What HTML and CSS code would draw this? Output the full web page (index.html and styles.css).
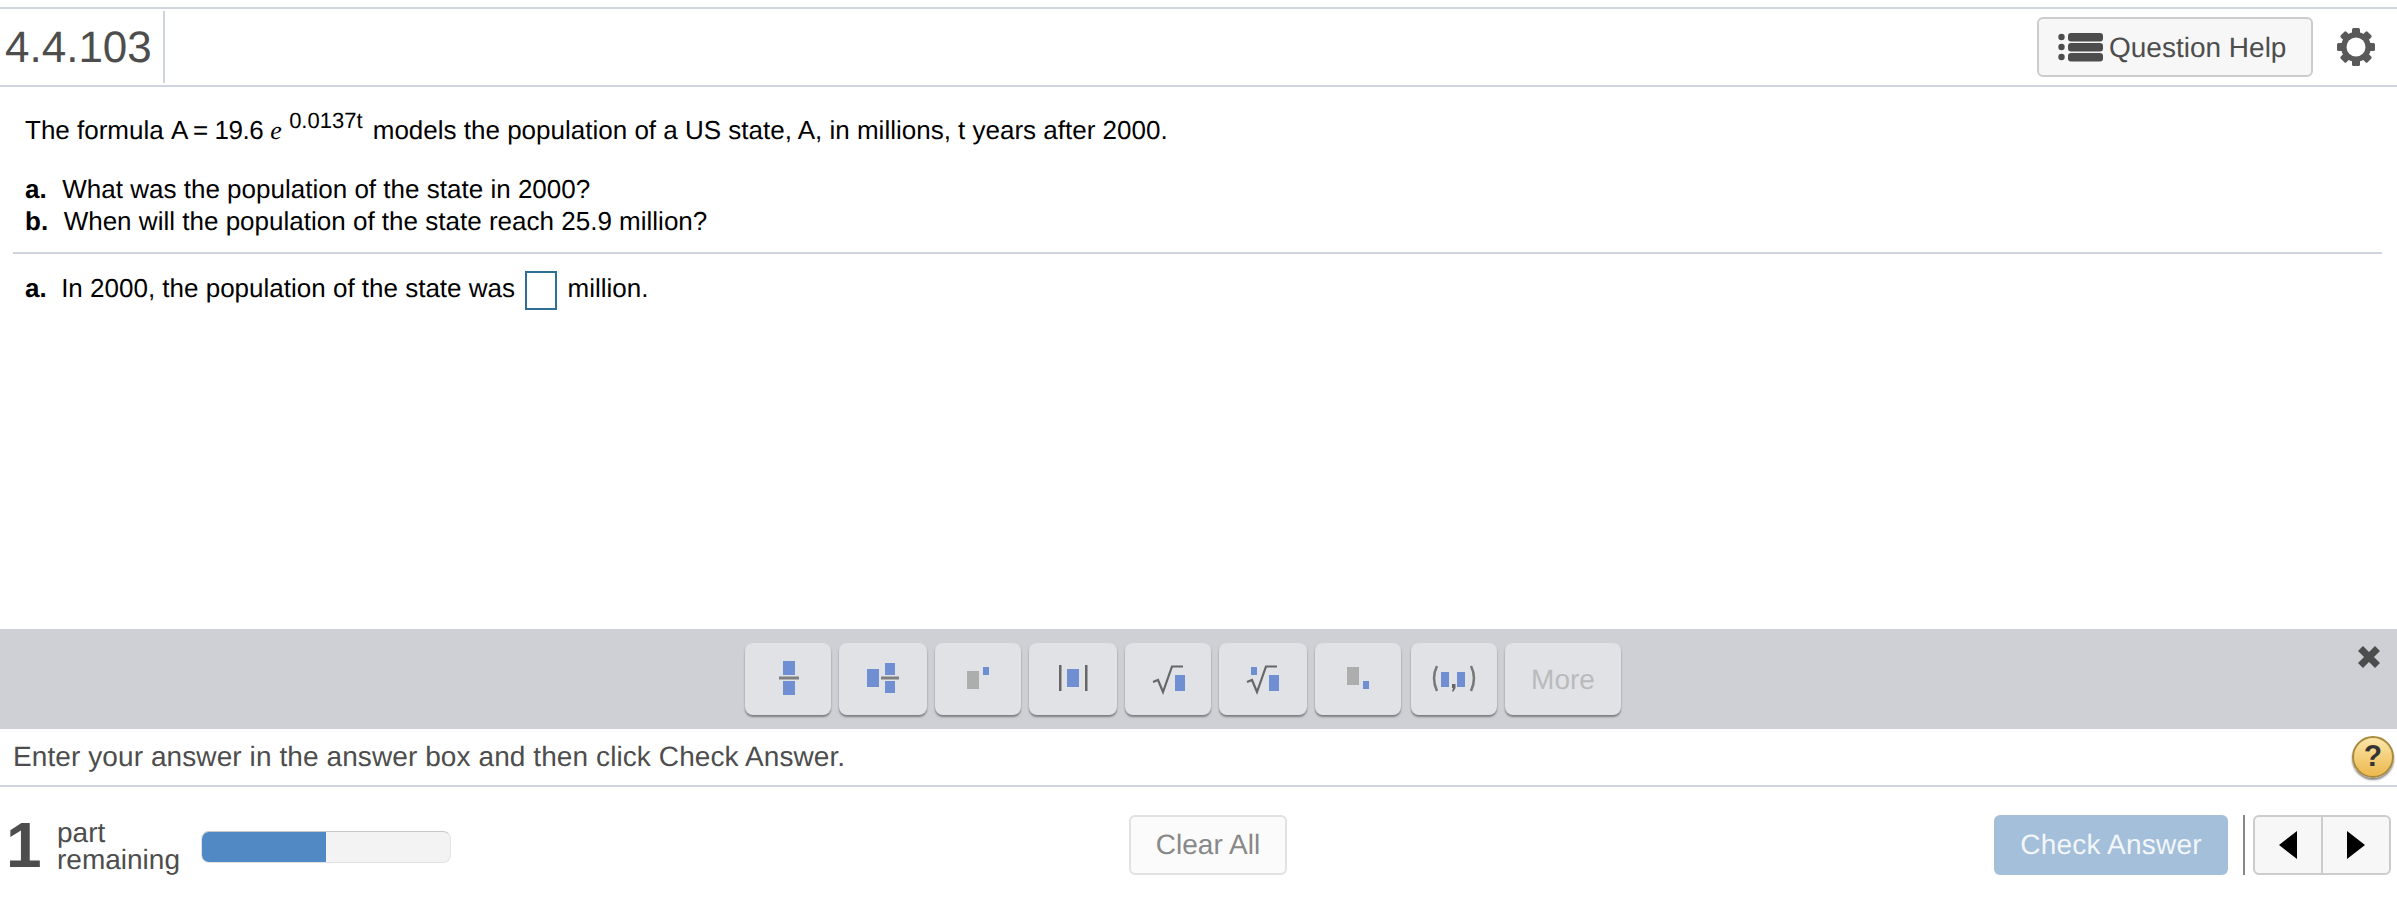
FILE: index.html
```html
<!DOCTYPE html>
<html lang="en">
<head>
    <meta charset="UTF-8">
    <title>4.4.103</title>
    <link rel="stylesheet" href="styles.css">
</head>
<body>
    <!-- Header -->
    <div class="header">
        <div class="title">4.4.103</div>
        <button class="help-btn">
            <svg class="help-icon" width="46" height="30" viewBox="0 0 46 30">
                <circle cx="4.5" cy="5" r="3.2"/><circle cx="4.5" cy="15" r="3.2"/><circle cx="4.5" cy="25" r="3.2"/>
                <rect x="11" y="1" width="35" height="8.5" rx="3"/><rect x="11" y="11" width="35" height="8.5" rx="3"/><rect x="11" y="21" width="35" height="8.5" rx="3"/>
            </svg>
            <span class="help-label">Question Help</span>
        </button>
        <svg class="gear" width="40" height="40" viewBox="0 0 40 40">
            <g fill="#595959">
                <rect x="16" y="1" width="8" height="38" rx="1.5"/>
                <rect x="16" y="1" width="8" height="38" rx="1.5" transform="rotate(45 20 20)"/>
                <rect x="16" y="1" width="8" height="38" rx="1.5" transform="rotate(90 20 20)"/>
                <rect x="16" y="1" width="8" height="38" rx="1.5" transform="rotate(135 20 20)"/>
                <circle cx="20" cy="20" r="15"/>
            </g>
            <circle cx="20" cy="20" r="9.5" fill="#fff"/>
        </svg>
    </div>

    <!-- Question -->
    <div class="main">
        <p class="formula">The formula <span class="tight">A = 19.6</span> <i class="e">e</i> <span class="exp">0.0137t</span> models the population of a US state, A, in millions, t years after 2000.</p>
        <div class="parts">
            <div><b>a.</b>&nbsp; What was the population of the state in 2000?</div>
            <div><b>b.</b>&nbsp; When will the population of the state reach 25.9 million?</div>
        </div>
        <div class="answer-row">
            <b>a.</b>&nbsp; In 2000, the population of the state was <span class="answer-box"></span> million.
        </div>
    </div>

    <!-- Math palette -->
    <div class="palette">
        <div class="tools">
            <div class="tool t86"><svg width="86" height="72"><rect class="bl" x="38" y="18" width="12" height="14"/><rect class="ln" x="34" y="33.5" width="20" height="3"/><rect class="bl" x="38" y="38" width="12" height="14"/></svg></div>
            <div class="tool t88"><svg width="88" height="72"><rect class="bl" x="28" y="26" width="12" height="18"/><rect class="bl" x="46" y="20" width="10" height="12"/><rect class="ln" x="42" y="33.5" width="18" height="3"/><rect class="bl" x="46" y="38" width="10" height="12"/></svg></div>
            <div class="tool t86"><svg width="86" height="72"><rect class="gr" x="32" y="28" width="12" height="18"/><rect class="bl" x="48" y="24" width="6" height="8"/></svg></div>
            <div class="tool t88"><svg width="88" height="72"><rect class="ln2" x="30" y="22" width="2.5" height="26"/><rect class="bl" x="38" y="26" width="12" height="18"/><rect class="ln2" x="56" y="22" width="2.5" height="26"/></svg></div>
            <div class="tool t86"><svg width="86" height="72"><path class="rad" d="M28 39l5-2 5 12 9-25.5h11"/><rect class="bl" x="50" y="32" width="10" height="16"/></svg></div>
            <div class="tool t88"><svg width="88" height="72"><path class="rad" d="M28 39l5-2 5 12 9-25.5h11"/><rect class="bl" x="32" y="24" width="6" height="8"/><rect class="bl" x="50" y="32" width="10" height="16"/></svg></div>
            <div class="tool t86"><svg width="86" height="72"><rect class="gr" x="32" y="24" width="12" height="18"/><rect class="bl" x="48" y="38" width="6" height="8"/></svg></div>
            <div class="tool t86 gap"><svg width="86" height="72"><path class="paren" d="M26 23q-6 12 0 25M60 23q6 12 0 25"/><rect class="bl" x="30" y="29" width="8" height="15"/><path class="comma" d="M41 41h3.5v4l-2 3.5h-1.5l1-3.5h-1z"/><rect class="bl" x="46" y="29" width="8" height="15"/></svg></div>
            <div class="tool more">More</div>
        </div>
        <svg class="close" width="24" height="24" viewBox="0 0 24 24"><path d="M3.5 3.5l17 17M20.5 3.5l-17 17"/></svg>
    </div>

    <!-- Hint -->
    <div class="hint">
        <span class="hint-text">Enter your answer in the answer box and then click Check Answer.</span>
        <div class="hint-help">?</div>
    </div>

    <!-- Footer -->
    <div class="footer">
        <div class="remaining">
            <div class="count">1</div>
            <div class="count-label">part<br>remaining</div>
            <div class="progress"><div class="progress-fill" style="width: 50%;"></div></div>
        </div>
        <button class="clear-btn">Clear All</button>
        <div class="actions">
            <button class="check-btn">Check Answer</button>
            <div class="divider"></div>
            <div class="nav">
                <div class="nav-cell"><svg width="18" height="28"><path d="M18 0v28L0 14z"/></svg></div>
                <div class="nav-cell"><svg width="18" height="28"><path d="M0 0v28l18-14z"/></svg></div>
            </div>
        </div>
    </div>
</body>
</html>
```

FILE: styles.css
```css
body {
    font-family: "Liberation Sans", Arial, sans-serif;
    background-color: #fff;
    color: #000;
    margin: 0;
    height: 901px;
    overflow: hidden;
    display: flex;
    flex-direction: column;
    text-rendering: geometricPrecision;
}
button {
    font-family: inherit;
    text-rendering: geometricPrecision;
}

/* header */
.header {
    margin-top: 7px;
    height: 76px;
    border-top: 2px solid #d0d4e0;
    border-bottom: 2px solid #d0d4e0;
    display: flex;
    align-items: center;
    flex-shrink: 0;
}
.title {
    width: 158px;
    height: 72px;
    line-height: 74px;
    padding-left: 5px;
    border-right: 2px solid #d0d4e0;
    font-size: 44px;
    color: #4d4d4d;
}
.help-btn {
    margin-left: auto;
    width: 276px;
    height: 60px;
    background-color: #f7f7f7;
    border: 2px solid #ccc;
    border-radius: 6px;
    padding: 0 0 0 18px;
    display: flex;
    align-items: center;
    gap: 6px;
    font-size: 28px;
    color: #4d4d4d;
}
.help-label {
    padding-top: 2px;
}
.help-icon {
    fill: #4d4d4d;
}
.gear {
    margin: 0 21px 0 23px;
}

/* question area */
.main {
    flex: 1;
    padding: 0 15px 0 13px;
    font-size: 26px;
}
.formula {
    margin: 0;
    padding: 27px 0 0 12px;
    height: 52px;
    line-height: 32px;
}
.tight {
    letter-spacing: -0.5px;
}
.e {
    font-family: "Liberation Serif", serif;
}
.exp {
    font-size: 22px;
    position: relative;
    top: -11px;
    margin-right: 3px;
}
.parts {
    margin-top: 7px;
    padding-left: 12px;
    line-height: 32px;
    padding-bottom: 15px;
    border-bottom: 2px solid #d0d4e0;
    word-spacing: 0.05px;
}
.parts b {
    margin-right: 1px;
}
.answer-row {
    padding: 14px 0 0 12px;
    line-height: 40px;
}
.answer-box {
    display: inline-block;
    width: 32px;
    height: 39px;
    box-sizing: border-box;
    border: 2px solid #2f6f94;
    vertical-align: middle;
    margin: 0 3px;
}

/* palette */
.palette {
    height: 100px;
    background-color: #cfd0d5;
    flex-shrink: 0;
    display: flex;
    align-items: flex-start;
    position: relative;
}
.tools {
    display: flex;
    gap: 8px;
    margin: 14px 0 0 745px;
}
.tool {
    height: 72px;
    background-color: #e1e2e5;
    border-radius: 8px;
    box-shadow: 0 2px 2px #7d7e82;
}
.tool svg {
    display: block;
}
.t86 {
    width: 86px;
}
.t88 {
    width: 88px;
}
.gap {
    margin-left: 2px;
}
.more {
    width: 116px;
    line-height: 74px;
    text-align: center;
    font-size: 28px;
    color: #b9babd;
}
.bl {
    fill: #6f8fd2;
}
.gr {
    fill: #adadad;
}
.ln {
    fill: #808080;
}
.ln2 {
    fill: #666;
}
.rad {
    fill: none;
    stroke: #666;
    stroke-width: 2.2;
}
.paren {
    fill: none;
    stroke: #777;
    stroke-width: 2.5;
}
.comma {
    fill: #666;
}
.close {
    position: absolute;
    left: 2357px;
    top: 16px;
    fill: none;
    stroke: #4d4d4d;
    stroke-width: 7;
}

/* hint row */
.hint {
    height: 56px;
    border-bottom: 2px solid #d0d4e0;
    flex-shrink: 0;
    display: flex;
    align-items: center;
    justify-content: space-between;
    padding: 0 3px 0 13px;
    font-size: 28px;
    color: #4d4d4d;
}
.hint-text {
    letter-spacing: 0.09px;
}
.hint-help {
    width: 42px;
    height: 42px;
    box-sizing: border-box;
    border-radius: 50%;
    border: 2px solid #a88a3e;
    background: linear-gradient(#fbe6a8, #edb84e);
    box-shadow: 0 2px 2px #8a8a8a;
    text-align: center;
    line-height: 38px;
    font-size: 30px;
    font-weight: bold;
    color: #333;
}

/* footer */
.footer {
    height: 114px;
    flex-shrink: 0;
    display: flex;
    align-items: flex-start;
    padding-top: 28px;
    box-sizing: border-box;
}
.remaining {
    width: 1129px;
    display: flex;
    align-items: flex-start;
    flex-shrink: 0;
}
.count {
    width: 57px;
    padding-left: 6px;
    box-sizing: border-box;
    font-size: 64px;
    font-weight: bold;
    line-height: 60px;
    color: #4d4d4d;
}
.count-label {
    width: 144px;
    font-size: 28px;
    line-height: 27px;
    color: #4d4d4d;
    margin-top: 4px;
}
.progress {
    width: 250px;
    height: 32px;
    margin-top: 16px;
    box-sizing: border-box;
    background-color: #f3f3f3;
    border: 1px solid #e2e2e2;
    border-top-color: #c8c8c8;
    border-radius: 8px;
    overflow: hidden;
}
.progress-fill {
    height: 100%;
    background-color: #5089c4;
}
.clear-btn {
    width: 158px;
    height: 60px;
    background-color: #fbfbfb;
    border: 2px solid #e2e2e2;
    border-radius: 6px;
    font-size: 28px;
    color: #888;
    padding: 0;
}
.actions {
    margin-left: auto;
    margin-right: 6px;
    display: flex;
}
.check-btn {
    width: 234px;
    height: 60px;
    background-color: #a3bfd9;
    border: none;
    border-radius: 6px;
    font-size: 28px;
    letter-spacing: 0.2px;
    color: #f4f6f9;
    padding: 0;
}
.divider {
    width: 2px;
    height: 60px;
    background-color: #888;
    margin: 0 8px 0 15px;
}
.nav {
    width: 138px;
    height: 60px;
    box-sizing: border-box;
    display: flex;
    background-color: #f7f7f7;
    border: 2px solid #ccc;
    border-radius: 6px;
}
.nav-cell {
    flex: 1;
    display: flex;
    align-items: center;
    justify-content: center;
}
.nav-cell + .nav-cell {
    border-left: 2px solid #ccc;
}
```
